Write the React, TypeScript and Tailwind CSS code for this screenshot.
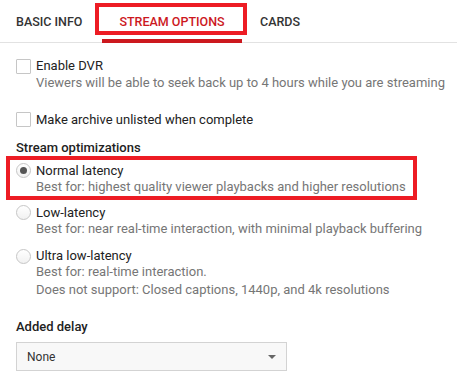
import React from "react";

const font = { fontFamily: "Roboto, 'Liberation Sans', Arial, sans-serif" };

function Checkbox() {
  return <div className="w-[15px] h-[15px] border border-[#c6c6c6] bg-white shrink-0 rounded-[1px]" />;
}

function Radio({ checked }: { checked?: boolean }) {
  return (
    <div className="w-[15px] h-[15px] rounded-full border border-[#c6c6c6] bg-gradient-to-b from-white to-[#f1f1f1] shrink-0 flex items-center justify-center">
      {checked && <div className="w-[7px] h-[7px] rounded-full bg-[#555]" />}
    </div>
  );
}

export default function App() {
  return (
    <div className="w-[457px] h-[381px] bg-white overflow-hidden relative text-[13px] leading-[16px] text-[#222]" style={font}>
      {/* Tabs */}
      <div className="h-[43px] border-b border-[#e2e2e2] flex items-stretch">
        <div className="w-[102px] pl-4 flex items-center pt-[1px] font-medium text-[#333] text-[12.5px]">BASIC INFO</div>
        <div className="w-[140px] relative flex items-center justify-center pt-[1px] font-medium text-[#cc181e] text-[12.5px]">
          STREAM OPTIONS
          <div className="absolute left-0 right-0 bottom-[-1px] h-[4px] bg-[#cc181e]" />
          <div className="absolute left-[-7px] right-[-5px] top-[3px] h-[32px] border-4 border-[#ed1c24]" />
        </div>
        <div className="pl-[18px] flex items-center pt-[1px] font-medium text-[#333] text-[12.5px]">CARDS</div>
      </div>

      <div className="pl-4">
        {/* Enable DVR */}
        <div className="flex gap-[5px] mt-[15px]">
          <div className="pt-[1px]"><Checkbox /></div>
          <div>
            <div>Enable DVR</div>
            <div className="text-[#767676] mt-[1px]">Viewers will be able to seek back up to 4 hours while you are streaming</div>
          </div>
        </div>

        {/* Archive */}
        <div className="flex gap-[5px] mt-[21px]">
          <Checkbox />
          <div>Make archive unlisted when complete</div>
        </div>

        <div className="font-medium mt-[12px]">Stream optimizations</div>

        <div className="relative mt-[7px]">
          <div className="absolute left-[-10px] top-[-7px] w-[411px] h-[44px] border-4 border-[#ed1c24]" />
          <div className="flex gap-[5px]">
            <Radio checked />
            <div>
              <div>Normal latency</div>
              <div className="text-[#767676]">Best for: highest quality viewer playbacks and higher resolutions</div>
            </div>
          </div>
        </div>

        <div className="flex gap-[5px] mt-[10px]">
          <Radio />
          <div>
            <div>Low-latency</div>
            <div className="text-[#767676]">Best for: near real-time interaction, with minimal playback buffering</div>
          </div>
        </div>

        <div className="flex gap-[5px] mt-[11px]">
          <div className="pt-[1px]"><Radio /></div>
          <div>
            <div>Ultra low-latency</div>
            <div className="text-[#767676]">Best for: real-time interaction.</div>
            <div className="text-[#767676] mt-[2px]">Does not support: Closed captions, 1440p, and 4k resolutions</div>
          </div>
        </div>

        <div className="font-medium mt-[21px]">Added delay</div>

        <div className="mt-[7px] w-[271px] h-[29px] border border-[#d3d3d3] bg-[#f8f8f8] flex items-center justify-between pl-[10px] pr-[10px]">
          <span className="text-[12px] text-[#333]">None</span>
          <svg width="8" height="4" viewBox="0 0 8 4"><path d="M0 0h8L4 4z" fill="#666" /></svg>
        </div>
      </div>
    </div>
  );
}
